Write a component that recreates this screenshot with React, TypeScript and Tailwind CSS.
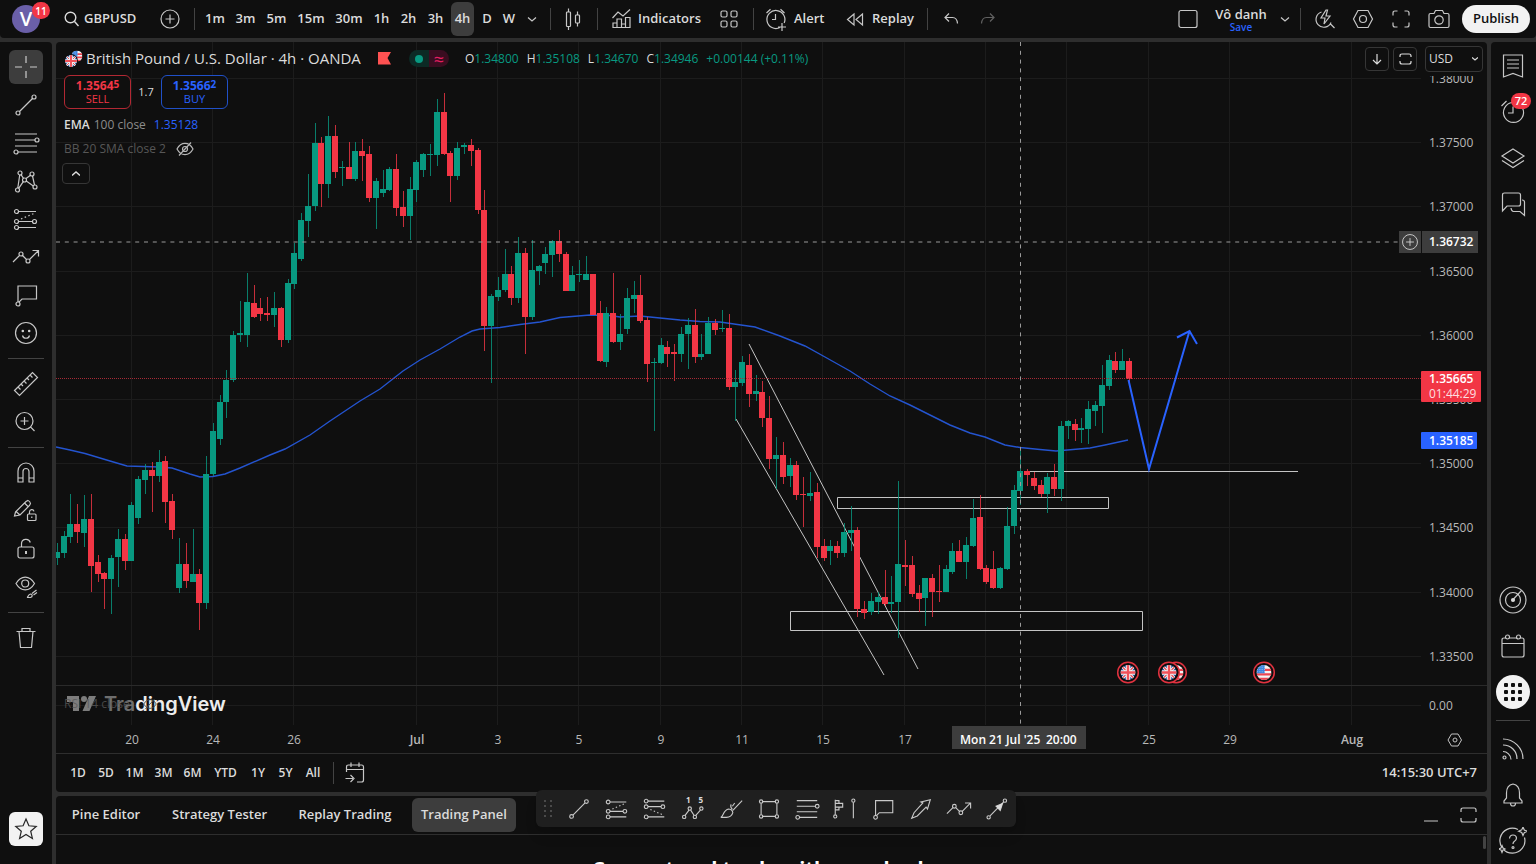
import { useState } from "react";
import type { ReactNode } from "react";

type Candle = [number, number, number, number, "g" | "r"];

// [high, body top, body bottom, low, colour] in pane pixels
const candles: Candle[] = [
  [543, 552, 558, 565, "g"], [531, 536, 553, 558, "g"], [494, 524, 537, 543, "g"], [504, 524, 532, 543, "r"],
  [495, 519, 533, 547, "g"], [494, 519, 566, 592, "r"], [555, 562, 574, 582, "r"], [572, 573, 579, 609, "r"],
  [555, 558, 579, 614, "g"], [529, 539, 557, 587, "g"], [534, 539, 561, 570, "r"], [502, 505, 561, 561, "g"],
  [476, 479, 518, 524, "g"], [464, 470, 480, 494, "g"], [462, 470, 476, 512, "r"], [450, 462, 476, 482, "g"],
  [456, 461, 502, 523, "r"], [494, 501, 530, 539, "r"], [538, 564, 588, 593, "g"], [543, 564, 581, 588, "r"],
  [529, 574, 582, 582, "g"], [569, 574, 603, 630, "r"], [456, 474, 603, 609, "g"], [423, 431, 474, 476, "g"],
  [395, 402, 439, 445, "g"], [370, 380, 402, 418, "g"], [331, 335, 380, 382, "g"], [301, 333, 335, 342, "g"],
  [273, 302, 335, 347, "g"], [285, 303, 317, 318, "r"], [298, 308, 314, 321, "r"], [297, 313, 315, 321, "r"],
  [292, 308, 315, 327, "g"], [307, 308, 340, 347, "r"], [279, 283, 340, 343, "g"], [243, 253, 284, 289, "g"],
  [213, 220, 259, 261, "g"], [174, 206, 221, 237, "g"], [123, 143, 206, 211, "g"], [137, 143, 184, 207, "r"],
  [116, 136, 184, 198, "g"], [125, 136, 172, 178, "r"], [161, 167, 168, 186, "g"], [142, 167, 179, 179, "r"],
  [142, 151, 179, 181, "g"], [139, 151, 156, 181, "r"], [146, 154, 198, 202, "r"], [178, 181, 198, 229, "g"],
  [170, 189, 193, 197, "g"], [167, 169, 190, 191, "g"], [154, 169, 208, 216, "r"], [191, 207, 216, 227, "r"],
  [177, 189, 216, 240, "g"], [160, 162, 190, 202, "g"], [153, 154, 170, 177, "g"], [144, 154, 155, 176, "g"],
  [99, 112, 155, 166, "g"], [93, 112, 154, 155, "r"], [151, 153, 176, 202, "r"], [142, 148, 176, 180, "g"],
  [143, 145, 147, 154, "g"], [139, 145, 151, 166, "r"], [148, 150, 210, 214, "r"], [190, 210, 326, 351, "r"],
  [294, 296, 326, 383, "g"], [277, 290, 297, 301, "g"], [249, 274, 290, 292, "g"], [266, 274, 298, 305, "r"],
  [237, 253, 298, 303, "g"], [248, 253, 317, 354, "r"], [240, 270, 317, 320, "g"], [265, 266, 271, 285, "g"],
  [247, 254, 263, 274, "g"], [240, 241, 255, 277, "g"], [230, 241, 254, 262, "r"], [252, 254, 291, 291, "r"],
  [266, 275, 291, 291, "g"], [260, 274, 275, 282, "g"], [256, 274, 280, 280, "g"], [274, 274, 315, 315, "r"],
  [301, 313, 361, 362, "r"], [307, 313, 362, 367, "g"], [273, 313, 342, 343, "r"], [314, 334, 342, 350, "g"],
  [288, 298, 329, 334, "g"], [281, 295, 299, 313, "g"], [275, 295, 321, 323, "r"], [317, 320, 364, 382, "r"],
  [358, 362, 363, 431, "g"], [338, 345, 363, 364, "g"], [341, 347, 354, 367, "r"], [344, 352, 354, 381, "r"],
  [327, 334, 354, 362, "g"], [318, 325, 334, 369, "g"], [309, 325, 357, 363, "r"], [334, 354, 357, 360, "g"],
  [317, 323, 354, 354, "g"], [319, 323, 330, 335, "r"], [310, 328, 329, 332, "g"], [314, 328, 387, 390, "r"],
  [370, 382, 387, 421, "g"], [356, 362, 383, 386, "g"], [354, 365, 394, 407, "r"], [375, 391, 394, 401, "g"],
  [381, 392, 418, 427, "r"], [396, 418, 459, 469, "r"], [437, 455, 459, 489, "g"], [442, 455, 477, 484, "r"],
  [458, 465, 476, 487, "g"], [461, 465, 495, 500, "r"], [477, 494, 495, 527, "r"], [472, 493, 496, 501, "g"],
  [483, 492, 547, 558, "r"], [539, 546, 558, 561, "r"], [540, 546, 551, 565, "g"], [541, 546, 553, 558, "r"],
  [523, 532, 553, 557, "g"], [506, 530, 533, 551, "g"], [527, 530, 609, 617, "r"], [601, 609, 613, 619, "r"],
  [593, 601, 612, 615, "g"], [592, 597, 602, 614, "g"], [570, 597, 604, 606, "r"], [576, 602, 604, 613, "g"],
  [481, 564, 602, 638, "g"], [540, 565, 567, 586, "r"], [556, 565, 594, 597, "r"], [585, 593, 599, 612, "r"],
  [578, 578, 598, 626, "g"], [574, 578, 592, 617, "r"], [565, 591, 592, 602, "r"], [565, 569, 592, 592, "g"],
  [543, 551, 572, 574, "g"], [540, 551, 562, 562, "r"], [537, 545, 562, 579, "g"], [499, 518, 546, 547, "g"],
  [495, 517, 569, 570, "r"], [565, 568, 582, 584, "r"], [551, 569, 588, 589, "r"], [567, 568, 588, 589, "g"],
  [507, 526, 569, 570, "g"], [485, 490, 526, 534, "g"], [448, 471, 491, 505, "g"], [469, 471, 475, 486, "r"],
  [472, 478, 486, 490, "r"], [480, 485, 494, 497, "r"], [473, 477, 494, 513, "g"], [464, 477, 489, 496, "r"],
  [421, 426, 489, 501, "g"], [420, 421, 426, 439, "g"], [419, 424, 430, 441, "r"], [418, 428, 430, 443, "g"],
  [401, 409, 429, 444, "g"], [401, 405, 411, 426, "g"], [365, 385, 406, 433, "g"], [355, 360, 386, 390, "g"],
  [352, 361, 370, 373, "r"], [349, 361, 370, 370, "g"], [358, 361, 379, 385, "r"],
];

const ema =
  "56,447 70,450 85,453.5 110,461 127,466 160,467 172,468 190,474 200,477 213,476.5 225,474 240,468 270,455 285,449 310,435 330,421 360,401 380,389 403,371 420,360 440,349 460,337 472,331 480,329 500,327.5 520,324.5 540,322 560,317.5 590,315 610,315.5 620,317 640,316 660,318 680,320 700,321.5 720,322 755,327 780,336 805,346 825,357 850,371 870,384 890,396 910,405 930,415 950,425 970,433 985,437 1005,445 1020,447.5 1040,449.5 1056,451 1090,448 1105,445 1128,440";

const prices: [string, number][] = [
  ["1.38000", 79], ["1.37500", 143], ["1.37000", 207], ["1.36500", 272], ["1.36000", 336],
  ["1.35500", 400], ["1.35000", 464], ["1.34500", 528], ["1.34000", 593], ["1.33500", 657], ["0.00", 706],
];

const dates: [string, number][] = [
  ["20", 132], ["24", 213], ["26", 294], ["Jul", 417], ["3", 498], ["5", 579], ["9", 661], ["11", 742],
  ["15", 823], ["17", 905], ["", 986], ["", 1067], ["25", 1149], ["29", 1230], ["Aug", 1352],
];

const Icon = ({ children, size = 28, w = 1.2 }: { children: ReactNode; size?: number; w?: number }) => (
  <svg width={size} height={size} viewBox="0 0 28 28" fill="none" stroke="currentColor" strokeWidth={w} strokeOpacity=".9" className="shrink-0" aria-hidden="true">
    {children}
  </svg>
);

const Chevron = () => (
  <Icon><path d="M10 12.500l4 3.500 4-3.500" /></Icon>
);

const icons: Record<string, ReactNode> = {
  cross: <path d="M14 3v7M14 18v7M3 14h7M18 14h7" />,
  trend: <><circle cx="22" cy="6" r="2" /><circle cx="6" cy="22" r="2" /><path d="M7.500 20.500l13-13" /></>,
  fib: <><path d="M3 5h22M3 11h20M3 17h22M6 23h19" /><circle cx="25" cy="11" r="2" /><circle cx="4" cy="23" r="2" /></>,
  pattern: <><circle cx="8" cy="6" r="2" /><circle cx="20" cy="7" r="2" /><circle cx="12.500" cy="13" r="2" /><circle cx="5.500" cy="23" r="2" /><circle cx="23" cy="20" r="2" /><path d="M7.700 8L5.800 21M9 7.700l2.500 3.700M18.500 8.300L14 11.500M20.500 9l2 9M14.300 14.100l7 4.800M11.300 14.700L6.700 21.400" /></>,
  forecast: <><circle cx="4.500" cy="6.500" r="2" /><circle cx="4.500" cy="16.500" r="2" /><circle cx="4.500" cy="22.500" r="2" /><circle cx="22.500" cy="16.500" r="2" /><path d="M6.500 6.500H24M6.500 16.500h14M6.500 22.500H24" /><path d="M9 14L23 8" strokeDasharray="1.500 2.500" /></>,
  forecastDown: <><circle cx="4.500" cy="5.500" r="2" /><circle cx="4.500" cy="11.500" r="2" /><circle cx="22.500" cy="11.500" r="2" /><circle cx="4.500" cy="22.500" r="2" /><path d="M6.500 5.500H24M6.500 11.500h14M6.500 22.500H24" /><path d="M9 14.500l14 6" strokeDasharray="1.500 2.500" /></>,
  wave: <><path d="M1 19l6.500-6.500M10.500 12.500l4 4M17.500 16.500l9-9M20.500 7.500h6v6" /><circle cx="9" cy="11" r="2" /><circle cx="16" cy="18" r="2" /></>,
  note: <><path d="M6 21V5h18.500v13H10l-3 3.200" /><circle cx="6" cy="23" r="2" /></>,
  smile: <><circle cx="14" cy="14" r="10.500" /><path d="M10.500 16.500a3.600 3.600 0 0 0 7 0" /><circle cx="10.800" cy="12" r=".7" fill="currentColor" /><circle cx="17.200" cy="12" r=".7" fill="currentColor" /></>,
  ruler: <path d="M2.500 20.500l18-18 5 5-18 18zM6 17l2.500 2.500M9 14l2 2M12 11l2.500 2.500M15 8l2 2M18 5l2.500 2.500" />,
  zoom: <><circle cx="12.500" cy="13" r="8.500" /><path d="M12.500 9v8M8.500 13h8M18.700 19.200l3.800 3.800" /></>,
  magnet: <path d="M6 23V12a8 8 0 0 1 16 0v11h-5V12.500a3 3 0 0 0-6 0V23zM6 19h5M17 19h5" />,
  pencil: <><path d="M3.500 15L14 4.500l2-1q2 .5 2.500 3l-1 2L8 18l-5.500 1zM12.500 6l4 4M4 14.500L8 18" /><rect x="15.500" y="17" width="8.500" height="6.500" rx="1" /><path d="M17.500 17v-2a2.300 2.300 0 0 1 4.500-.7M19.800 19.500v1.500" /></>,
  lock: <><rect x="6" y="12" width="16" height="11" rx="2" /><path d="M9.500 12V9a4.500 4.500 0 0 1 8.800-1.500" /><path d="M14 16v3" strokeWidth="2" /></>,
  eye: <><path d="M4 10.500c5-8.500 13.500-8.500 18.500 0-5 8.500-13.500 8.500-18.500 0z" /><circle cx="13.200" cy="10.500" r="3.500" /><path d="M15 24.500c1.500-.5 1-3 3.500-3.500 2 0 2.500 3 0 3.500zM20 20.500l4.500-3.500M21.500 22l3.500-2.500" /></>,
  trash: <path d="M4.500 7.500h19M10 7V4.500h8V7M7 7.500l1.500 16h11l1.500-16" />,
  star: <path d="M14 4l2.900 6.800 7.300.6-5.500 4.800 1.700 7.200L14 19.500l-6.400 3.900 1.700-7.200-5.500-4.800 7.300-.6z" />,
  candles: <><rect x="6.500" y="7" width="4" height="14.500" rx=".8" /><path d="M8.500 3.500V7M8.500 21.500V25" /><rect x="15.500" y="10" width="4" height="8" rx=".8" /><path d="M17.500 6.500V10M17.500 18v3.500" /></>,
  indicators: <path d="M5.500 13l5.500-6 5 4 7-6.500M6 22.500v-4.500h4v-4h4.500v5h4v-6.500H23v10zM10 18v4.500M14.500 19v3.500M18.500 19v3.500" />,
  layouts: <><rect x="6" y="6" width="6" height="6" rx="1.500" /><rect x="16" y="6" width="6" height="6" rx="1.500" /><rect x="6" y="16" width="6" height="6" rx="1.500" /><rect x="16" y="16" width="6" height="6" rx="1.500" /></>,
  alert: <><path d="M18 22.500a9 9 0 1 1 4.200-4.500M13.500 9v5.500H10M4.500 8l4-3.800M18.500 4.200l4 3.800M20 18v8M16 22h8" /></>,
  replay: <path d="M13 9l-6.500 5.500L13 20zM21.500 9L15 14.500l6.500 5.500z" />,
  undo: <path d="M12 8.500L8 12.500l4 4M8 12.500h7.500q4.500 0 5 6" />,
  redo: <path d="M17 8.500l4 4-4 4M21 12.500h-7.500q-4.500 0-5 6" />,
  square: <rect x="5" y="5.500" width="18" height="17" rx="2" />,
  flashSearch: <path d="M10.500 7A7.800 7.800 0 1 0 20 17.500M15 5l-5 8h4l-1 6 6-8h-4l1.500-6zM19.500 19l4 4" />,
  hex: <><path d="M9 5.500h10l4.500 8.500-4.500 8.500H9L4.500 14z" /><circle cx="14" cy="14" r="3.500" /></>,
  full: <path d="M6 10.500V8q0-2 2-2h2.500M17.500 6H20q2 0 2 2v2.500M22 17.500V20q0 2-2 2h-2.500M10.500 22H8q-2 0-2-2v-2.500" />,
  camera: <><path d="M4 21V10q0-1.500 1.500-1.500h3.500l1.500-3h7l1.500 3h3.500q1.500 0 1.500 1.500v11q0 1.500-1.500 1.500h-17Q4 22.500 4 21z" /><circle cx="14" cy="15" r="4.200" /></>,
  watch: <path d="M4.500 3h19v22L14 21.500 4.500 25zM8 8h12M8 12h12M8 16h12" />,
  clock: <path d="M13.500 4.500a10 10 0 1 0 2 0M14 8.500v6.500H9M2.500 8l5-5M20 3l5.500 5" />,
  layers: <path d="M14 5l11 7-11 7-11-7zM3 16.500l11 7 11-7" />,
  chat: <path d="M5.500 3h14q2 0 2 2v9q0 2-2 2H8l-4.500 5V5q0-2 2-2zM23 10q2.500 0 2.500 2v13.500L21 21.500h-6.500q-2 0-2.500-3.500" />,
  radar: <><circle cx="14" cy="14" r="13" /><circle cx="14" cy="14" r="7.500" /><circle cx="14" cy="14" r="1.500" fill="currentColor" /><path d="M14.500 13l8-8.500" /></>,
  calendar: <><path d="M3 8q0-2 2-2h18q2 0 2 2v15q0 2-2 2H5q-2 0-2-2zM3 11.500h22" /><circle cx="8.500" cy="5" r="2" fill="#0f0f0f" /><circle cx="19.500" cy="5" r="2" fill="#0f0f0f" /></>,
  feed: <><path d="M4 4c11 0 20 9 20 20M4 10c8 0 14 6 14 14M4 16.500c4 0 8 3.500 8 8" /><circle cx="5.500" cy="22.500" r="1.500" /></>,
  bell: <path d="M14 3c-5 1-6.500 5-6.500 9v5L5 20v2h18v-2l-2.500-3v-5c0-4-1.500-8-6.500-9zM11.500 22.500a2.500 2.500 0 0 0 5 0" />,
  help: <><path d="M19 2.500a12.500 12.500 0 1 0 6.500 8M10.500 11.500q.3-3.500 3.500-3.500t3.500 3q0 2-2 3.200-1.500.8-1.500 2.800" /><circle cx="14" cy="20.500" r="1" /><path d="M24 0l1.300 3 3 1.300-3 1.300L24 8.500l-1.300-3-3-1.300 3-1.300zM3 18.500l1 2.500 2 1-2 1-1 2.500-1-2.500-2-1 2-1z" fill="#0f0f0f" /></>,
  goto: <path d="M5.500 13V8q0-2 2-2h13q2 0 2 2v13q0 2-2 2H16M5.500 10.500h17M10 3.500V8M18 3.500V8M4.500 19.500h7.500M9.500 16l3.500 3.500L9.500 23" />,
  elliott: <><path d="M5.500 20.800l4.200-5.600M11.500 15.200l3.600 5.600M17 20.800l5-5.600" /><circle cx="4.500" cy="22.500" r="1.800" /><circle cx="10.500" cy="13.500" r="1.800" /><circle cx="16" cy="22.500" r="1.800" /><circle cx="23" cy="13.500" r="1.800" /></>,
  brush: <path d="M3 23c3-1 2.500-8 8.500-9q4 .5 4.500 4-1.500 5-7 5zM14 9q-1 3 1.500 5.500M16 15.500L26 5M15.500 11l2.500-3.500" />,
  rect: <><path d="M7 6h14M7 22h14M5.500 8v12M22.500 8v12" /><circle cx="5.500" cy="6" r="1.800" /><circle cx="22.500" cy="6" r="1.800" /><circle cx="5.500" cy="22" r="1.800" /><circle cx="22.500" cy="22" r="1.800" /></>,
  profile: <><path d="M3.500 20V4M3.500 5h4v3h4v4h-4v3h-4M3.500 8h4M3.500 12h4" /><circle cx="3.500" cy="22" r="1.700" /><circle cx="23" cy="5" r="1.700" /><path d="M23 7v17" /></>,
  arrow: <path d="M4 24l2.500-6L16 7.500l-2-1L24 4l-3 10-1.500-2L10 21.500z" />,
  arrowLine: <><circle cx="5" cy="23" r="1.800" /><circle cx="22.500" cy="5" r="1.800" /><path d="M6.500 21.500L21 6.500" /><path d="M20 8l-2.500 7.500-4.500-4.500z" fill="currentColor" /></>,
};

const UkFlag = ({ x, y, r }: { x: number; y: number; r: number }) => (
  <svg x={x - r} y={y - r} width={r * 2} height={r * 2} viewBox="0 0 20 20">
    <clipPath id={`uk${x}`}><circle cx="10" cy="10" r="10" /></clipPath>
    <g clipPath={`url(#uk${x})`}>
      <rect width="20" height="20" fill="#1c4f9c" />
      <path d="M0 0l20 20M20 0L0 20" stroke="#f3f3f3" strokeWidth="4" />
      <path d="M0 0l20 20M20 0L0 20" stroke="#e8434c" strokeWidth="1.500" />
      <path d="M10 0v20M0 10h20" stroke="#f3f3f3" strokeWidth="6" />
      <path d="M10 0v20M0 10h20" stroke="#f0525a" strokeWidth="3.200" />
    </g>
  </svg>
);

const UsFlag = ({ x, y, r }: { x: number; y: number; r: number }) => (
  <svg x={x - r} y={y - r} width={r * 2} height={r * 2} viewBox="0 0 20 20">
    <clipPath id={`us${x}`}><circle cx="10" cy="10" r="10" /></clipPath>
    <g clipPath={`url(#us${x})`}>
      <rect width="20" height="20" fill="#f3f3f3" />
      <path d="M0 6.500h20M0 12.500h20M0 18.500h20" stroke="#ef4550" strokeWidth="3.200" />
      <rect width="11" height="11" fill="#3d86e0" />
      <path d="M1 3h10M1 6h10M1 9h10" stroke="#cfe3fa" strokeWidth="1" strokeDasharray="1 2" />
    </g>
  </svg>
);

const Separator = () => (
  <div className="flex w-3 shrink-0 justify-center">
    <div className="h-[22px] w-px bg-[#434343]" />
  </div>
);

const intervals: [string, string][] = [
  ["1m", "w-[30px]"], ["3m", "w-[31px]"], ["5m", "w-[31px]"], ["15m", "w-[38px]"], ["30m", "w-[38px]"],
  ["1h", "w-[27px]"], ["2h", "w-[27px]"], ["3h", "w-[27px]"], ["4h", "w-[27px]"], ["D", "w-[22px]"], ["W", "w-[22px]"],
];

const Header = () => {
  const [active, setActive] = useState("4h");

  return (
    <header className="flex h-[38px] shrink-0 items-center rounded-b bg-[#0f0f0f] text-[13px] font-semibold">
      <div className="w-14 shrink-0 pl-3">
        <button className="relative flex h-7 w-7 items-center justify-center rounded-full bg-[#6a5fa8] text-xl text-white">
          V
          <span className="absolute -top-[3px] left-5 flex h-[17px] w-[18px] items-center justify-center rounded-full bg-[#f23645] text-[10px]">11</span>
        </button>
      </div>
      <button className="flex w-24 items-center gap-1 pl-2">
        <svg width="16" height="16" viewBox="0 0 16 16" fill="none" stroke="currentColor" strokeWidth="1.400"><circle cx="6.500" cy="6.500" r="5.300" /><path d="M10.500 10.500l4 4.500" /></svg>
        GBPUSD
      </button>
      <button className="flex w-9 justify-center" aria-label="Compare">
        <Icon><circle cx="14" cy="14" r="9" /><path d="M14 9.500v9M9.500 14h9" /></Icon>
      </button>
      <Separator />
      {intervals.map(([label, width]) => (
        <button key={label} onClick={() => setActive(label)} className={`${width} flex shrink-0 justify-center`}>
          <span className={`flex h-[34px] items-center rounded-md ${active === label ? "w-[23px] justify-center bg-[#3d3d3d]" : ""}`}>{label}</span>
        </button>
      ))}
      <button className="flex w-6 justify-center" aria-label="More intervals"><Chevron /></button>
      <Separator />
      <button className="flex w-[35px] justify-center" aria-label="Chart type"><Icon>{icons.candles}</Icon></button>
      <Separator />
      <button className="flex w-[108px] items-center gap-[3px] pl-1"><Icon>{icons.indicators}</Icon>Indicators</button>
      <button className="flex w-9 justify-center" aria-label="Templates"><Icon>{icons.layouts}</Icon></button>
      <Separator />
      <button className="flex w-[78px] items-center gap-1 pl-[3px]"><Icon>{icons.alert}</Icon>Alert</button>
      <button className="flex w-[84px] items-center gap-[3px] pl-1"><Icon>{icons.replay}</Icon>Replay</button>
      <Separator />
      <button className="flex w-9 justify-center" aria-label="Undo"><Icon>{icons.undo}</Icon></button>
      <button className="flex w-9 justify-center text-[#6a6a6a]" aria-label="Redo"><Icon>{icons.redo}</Icon></button>

      <div className="ml-auto flex items-center pr-[6px]">
        <button className="flex w-9 justify-center" aria-label="Layout"><Icon>{icons.square}</Icon></button>
        <button className="flex w-[70px] flex-col items-center leading-4">
          Vô danh
          <span className="text-[10px] leading-[10px] text-[#2962ff]">Save</span>
        </button>
        <button className="flex w-[18px] justify-center" aria-label="Manage layouts"><Chevron /></button>
        <Separator />
        <button className="flex w-[38px] justify-center" aria-label="Quick search"><Icon>{icons.flashSearch}</Icon></button>
        <button className="flex w-[38px] justify-center" aria-label="Settings"><Icon>{icons.hex}</Icon></button>
        <button className="flex w-[38px] justify-center" aria-label="Fullscreen"><Icon>{icons.full}</Icon></button>
        <button className="flex w-[38px] justify-center" aria-label="Snapshot"><Icon>{icons.camera}</Icon></button>
        <button className="ml-1 h-7 w-[68px] rounded-full bg-[#f2f2f2] text-[#0f0f0f]">Publish</button>
      </div>
    </header>
  );
};

const toolGroups = [
  ["cross", "trend", "fib", "pattern", "forecast", "wave", "note", "smile"],
  ["ruler", "zoom"],
  ["magnet", "pencil", "lock", "eye"],
  ["trash"],
];

const DrawingTools = () => (
  <aside className="flex w-[52px] shrink-0 flex-col items-center rounded-tr bg-[#0f0f0f] pt-2 pb-[18px]">
    {toolGroups.map((group, i) => (
      <div key={i} className="flex flex-col items-center">
        {i > 0 && <div className="my-2 h-px w-9 bg-[#434343]" />}
        <div className="flex flex-col gap-1">
          {group.map((name) => (
            <button
              key={name}
              aria-label={name}
              className={`flex h-[34px] w-[34px] items-center justify-center rounded-md ${name === "cross" ? "bg-[#3d3d3d]" : ""}`}
            >
              <Icon>{icons[name]}</Icon>
            </button>
          ))}
        </div>
      </div>
    ))}
    <button aria-label="Favorites" className="mt-auto flex h-[34px] w-[34px] items-center justify-center rounded-md bg-[#f2f2f2] text-[#0f0f0f]">
      <Icon>{icons.star}</Icon>
    </button>
  </aside>
);

const RightBar = () => (
  <aside className="flex w-[45px] shrink-0 flex-col items-center rounded-tl bg-[#0f0f0f] pt-px pr-px">
    {["watch", "clock", "layers", "chat"].map((name) => (
      <button key={name} aria-label={name} className="relative flex h-[46px] w-full items-center justify-center">
        <Icon>{icons[name]}</Icon>
        {name === "clock" && (
          <span className="absolute top-1 right-1 flex h-4 w-5 items-center justify-center rounded-full bg-[#f23645] text-[11px] font-semibold text-white">72</span>
        )}
      </button>
    ))}
    <div className="mt-auto" />
    {["radar", "calendar"].map((name) => (
      <button key={name} aria-label={name} className="flex h-[46px] w-full items-center justify-center">
        <Icon>{icons[name]}</Icon>
      </button>
    ))}
    <button aria-label="Products" className="flex h-[46px] w-full items-center justify-center">
      <span className="flex h-[34px] w-[34px] items-center justify-center rounded-full bg-[#f2f2f2]">
        <span className="grid grid-cols-[4px_4px_4px] gap-[3px]">
          {Array.from({ length: 9 }, (_, i) => (
            <span key={i} className="h-1 w-1 rounded-[1px] bg-[#0f0f0f]" />
          ))}
        </span>
      </span>
    </button>
    <div className="my-[5px] h-px w-[34px] bg-[#434343]" />
    {["feed", "bell", "help"].map((name) => (
      <button key={name} aria-label={name} className="flex h-[46px] w-full items-center justify-center">
        <Icon>{icons[name]}</Icon>
      </button>
    ))}
  </aside>
);

const Chart = () => (
  <svg viewBox="56 42 1431 711" preserveAspectRatio="xMaxYMin slice" className="block h-full w-full text-xs" role="img" aria-label="GBPUSD 4h chart">
    <g stroke="#1c1c1c">
      {dates.map(([, x]) => <path key={x} d={`M${x - 0.5} 42V725`} />)}
      {prices.map(([, y]) => <path key={y} d={`M56 ${y - 0.5}H1421`} />)}
      <path d="M56 685.500H1487" stroke="#2a2a2a" />
    </g>

    {/* drawings under the series */}
    <g fill="none" stroke="#c4c4c4">
      <path d="M749 344l169 325M736 419l148 256" />
      <path d="M837.500 497.500h271v11h-271zM790.500 611.500h352v19h-352z" />
      <path d="M1030 471.500h268" />
    </g>

    <polyline points={ema} fill="none" stroke="#2454cf" strokeWidth="1.400" />
    {candles.map(([high, top, bottom, low, tone], i) => {
      const x = Math.round(1020.3 - (142 - i) * 6.785);
      const color = tone === "g" ? "#089981" : "#f23645";
      return (
        <g key={i} fill={color}>
          <rect x={x} y={high} width="1" height={low - high} opacity=".8" />
          <rect x={x - 3} y={top} width="6" height={Math.max(bottom - top, 1)} />
        </g>
      );
    })}

    <path d="M56 378.500H1421" stroke="#a52a36" strokeDasharray="1 1" />
    <g fill="none" stroke="#2962ff" strokeWidth="2">
      <path d="M1128.500 380l20.500 89 40.500-138M1177 337.500l12.500-6.500 7.500 13" />
    </g>

    {/* economic events */}
    <g fill="#0f0f0f" stroke="#e0323f" strokeWidth="1.500">
      <circle cx="1176" cy="672.500" r="10.300" />
    </g>
    <UsFlag x={1176} y={672.5} r={7.5} />
    <g fill="#0f0f0f" stroke="#e0323f" strokeWidth="1.500">
      <circle cx="1128" cy="672.500" r="10.300" />
      <circle cx="1169" cy="672.500" r="10.300" />
      <circle cx="1264" cy="672.500" r="10.300" />
    </g>
    <UkFlag x={1128} y={672.5} r={7.5} />
    <UkFlag x={1169} y={672.5} r={7.5} />
    <UsFlag x={1264} y={672.5} r={7.5} />

    {/* crosshair */}
    <path d="M56 242H1399M1020.500 42V725" stroke="#9a9a9a" strokeDasharray="4 4.800" />

    {/* price scale */}
    <g fill="#b8b8b8">
      {prices.map(([label, y]) => <text key={label} x="1429" y={y + 4}>{label}</text>)}
    </g>
    <rect x="1422" y="231" width="56" height="22" fill="#3d3d3d" />
    <rect x="1421" y="371" width="60" height="31" rx="1" fill="#f23645" />
    <rect x="1421" y="432" width="56" height="17" rx="1" fill="#2962ff" />
    <g fill="#fff" fontWeight="600">
      <text x="1429" y="246">1.36732</text>
      <text x="1429" y="383">1.35665</text>
      <text x="1429" y="398" fillOpacity=".85" fontWeight="400">01:44:29</text>
      <text x="1429" y="445">1.35185</text>
    </g>

    {/* time scale */}
    <g fill="#b8b8b8" textAnchor="middle">
      {dates.map(([label, x]) => (
        <text key={x} x={x} y="744" fontWeight={/[A-Z]/.test(label) ? 600 : 400}>{label}</text>
      ))}
    </g>
    <rect x="952" y="726" width="134" height="23" fill="#3d3d3d" />
    <g fill="#fff" fontWeight="600">
      <text x="960" y="744">Mon 21 Jul '25</text>
      <text x="1046" y="744">20:00</text>
    </g>
    <g fill="none" stroke="#c4c4c4"><path d="M1451.500 734h6.500l3.500 6-3.500 6h-6.500l-3.500-6z" /><circle cx="1455" cy="740" r="2" /></g>
  </svg>
);

const Legend = () => (
  <div className="absolute top-0 left-2 flex flex-col items-start">
    <div className="flex h-[33px] items-center">
      <svg width="20" height="20" viewBox="0 0 20 20" className="mr-[2px]">
        <UsFlag x={13} y={7} r={5.5} />
        <circle cx="7" cy="12" r="7" fill="#0f0f0f" />
        <UkFlag x={7} y={12} r={6} />
      </svg>
      <h1 className="w-[292px] text-[15px] font-medium whitespace-nowrap">British Pound / U.S. Dollar · 4h · OANDA</h1>
      <svg width="13" height="13" viewBox="0 0 13 13"><path d="M0 0h13l-3.500 6 3.500 6.500H0z" fill="#ff5252" /></svg>
      <div className="ml-[18px] flex h-[17px] w-10 overflow-hidden rounded-full">
        <span className="flex w-5 items-center justify-center bg-[#0c2a25]"><span className="h-2 w-2 rounded-full bg-[#089981]" /></span>
        <span className="flex w-5 items-center justify-center bg-[#3a0d20] text-lg leading-none text-[#e91e63]">≈</span>
      </div>
      <p className="ml-4 flex gap-2 text-xs whitespace-nowrap text-[#089981]">
        <span><b className="font-medium text-[#dbdbdb]">O</b>1.34800</span>
        <span><b className="font-medium text-[#dbdbdb]">H</b>1.35108</span>
        <span><b className="font-medium text-[#dbdbdb]">L</b>1.34670</span>
        <span><b className="font-medium text-[#dbdbdb]">C</b>1.34946</span>
        <span>+0.00144 (+0.11%)</span>
      </p>
    </div>
    <div className="flex items-center text-center">
      <button className="h-[34px] w-[67px] rounded-md border border-[#b22833] bg-[#0f0f0f] text-[#f23645]">
        <span className="block text-xs leading-[14px] font-bold">1.3564<span className="align-[2px] text-[10px] leading-none">5</span></span>
        <span className="block text-[11px] leading-3">SELL</span>
      </button>
      <span className="w-[30px] text-[11px]">1.7</span>
      <button className="h-[34px] w-[67px] rounded-md border border-[#2050c8] bg-[#0f0f0f] text-[#2962ff]">
        <span className="block text-xs leading-[14px] font-bold">1.3566<span className="align-[2px] text-[10px] leading-none">2</span></span>
        <span className="block text-[11px] leading-3">BUY</span>
      </button>
    </div>
    <p className="mt-1 flex h-6 items-center text-xs text-[#8c8c8c]">
      <b className="mr-1 font-semibold text-[#dbdbdb]">EMA</b>100 close<span className="ml-2 text-[#2962ff]">1.35128</span>
    </p>
    <div className="flex h-6 items-center gap-[10px] text-xs text-[#575757]">
      BB 20 SMA close 2
      <svg width="18" height="14" viewBox="0 0 18 14" fill="none" stroke="#b8b8b8" strokeWidth="1.200"><path d="M1 7c4-7.500 12-7.500 16 0-4 7.500-12 7.500-16 0zM3 13.500L15 .5" /><circle cx="9" cy="7" r="2.500" /></svg>
    </div>
    <button aria-label="Collapse" className="-ml-[2px] mt-[2px] flex h-[21px] w-7 items-center justify-center rounded border border-[#363636]">
      <svg width="8" height="5" viewBox="0 0 8 5" fill="none" stroke="currentColor" strokeWidth="1.400"><path d="M0 4.500l4-3.500 4 3.500" /></svg>
    </button>
  </div>
);

const ranges: [string, string][] = [
  ["1D", "w-7"], ["5D", "w-7"], ["1M", "w-[29px]"], ["3M", "w-[29px]"], ["6M", "w-[29px]"],
  ["YTD", "w-[37px]"], ["1Y", "w-7"], ["5Y", "w-[27px]"], ["All", "w-7"],
];

const ChartPanel = () => (
  <section className="flex min-h-0 flex-1 flex-col rounded bg-[#0f0f0f]">
    <div className="relative min-h-0 flex-1 overflow-hidden">
      <Chart />
      <Legend />
      <div className="absolute top-0 right-0 flex h-[34px] items-center gap-1 pr-1">
        <button aria-label="Scroll down" className="flex h-6 w-6 items-center justify-center rounded border border-[#363636]">
          <svg width="10" height="12" viewBox="0 0 10 12" fill="none" stroke="currentColor" strokeWidth="1.200"><path d="M5 1v10M1 7l4 4 4-4" /></svg>
        </button>
        <button aria-label="Maximize pane" className="mr-1 flex h-6 w-6 items-center justify-center rounded border border-[#363636]">
          <svg width="13" height="12" viewBox="0 0 13 12" fill="none" stroke="currentColor" strokeWidth="1.200"><path d="M1 4V3q0-2 2-2h7q2 0 2 2v1M1 8v1q0 2 2 2h7q2 0 2-2V8" /></svg>
        </button>
        <div className="relative flex h-[34px] items-center bg-[#0f0f0f]">
          <select aria-label="Currency" className="h-[26px] w-[58px] appearance-none rounded border border-[#363636] bg-[#0f0f0f] pl-[3px] text-xs">
            <option>USD</option>
          </select>
          <svg width="6" height="4" viewBox="0 0 6 4" fill="none" stroke="currentColor" strokeWidth="1.300" className="pointer-events-none absolute right-[5px]"><path d="M0 .5l3 2.500 3-2.500" /></svg>
        </div>
      </div>
      <button aria-label="Add alert" className="absolute top-[189px] right-[66px] flex h-[22px] w-[22px] items-center justify-center bg-[#3d3d3d]">
        <Icon size={22}><circle cx="14" cy="14" r="9.500" /><path d="M14 9v10M9 14h10" /></Icon>
      </button>
      <div className="absolute bottom-[36px] left-2 flex items-center">
        <svg width="36" height="20" viewBox="0 0 36 20" fill="#7d7d7d" className="mr-1"><path d="M3 2h12v15H9V8H3zM25 2h7l-6.500 15h-7z" /><circle cx="20" cy="5" r="3" /></svg>
        <span className="font-[Inter] text-[20px] leading-[26px] font-semibold text-[#ececec]"><span className="text-[#6e6e6e]">Tra</span>dingView</span>
        <p className="absolute left-0 text-xs text-[#575757]/80">RSI 14 close</p>
        <svg width="14" height="12" viewBox="0 0 18 14" fill="none" stroke="#4a4a4a" strokeWidth="1.200" className="absolute left-[79px]"><path d="M1 7c4-7.500 12-7.500 16 0-4 7.500-12 7.500-16 0zM3 13.500L15 .5" /></svg>
      </div>
    </div>
    <div className="flex h-[39px] shrink-0 items-center border-t border-[#2e2e2e] pr-[10px] pl-2 text-xs font-semibold">
      {ranges.map(([label, width]) => (
        <button key={label} className={`${width} text-center`}>{label}</button>
      ))}
      <Separator />
      <button className="flex w-8 justify-center" aria-label="Go to date"><Icon>{icons.goto}</Icon></button>
      <button className="ml-auto text-[13px]">14:15:30 UTC+7</button>
    </div>
  </section>
);

const favorites = ["trend", "forecast", "forecastDown", "elliott", "brush", "rect", "fib", "profile", "note", "arrow", "wave", "arrowLine"];

const FavoritesBar = () => (
  <div className="absolute bottom-[37px] left-[480px] flex h-[37px] items-center rounded-md bg-[#1f1f1f] shadow-lg">
    <div className="grid w-6 grid-cols-2 place-content-center gap-x-1 gap-y-[3px] px-2">
      {Array.from({ length: 8 }, (_, i) => <span key={i} className="h-[2px] w-[2px] bg-[#4a4a4a]" />)}
    </div>
    {favorites.map((name) => (
      <button key={name} aria-label={name} className="relative flex w-[38px] justify-center">
        <Icon size={26}>{icons[name]}</Icon>
        {name === "elliott" && (
          <span className="absolute -top-[1px] flex w-5 justify-between pl-[3px] text-[8px] leading-[10px] font-bold"><span>1</span><span>5</span></span>
        )}
      </button>
    ))}
  </div>
);

const tabs: [string, string][] = [
  ["Pine Editor", "w-[90px]"], ["Strategy Tester", "w-[117px]"], ["Replay Trading", "w-[114px]"], ["Trading Panel", "w-[104px]"],
];

const BottomPanel = () => {
  const [tab, setTab] = useState("Trading Panel");

  return (
    <section className="h-[68px] shrink-0 overflow-hidden rounded-t bg-[#0f0f0f]">
      <div className="flex h-[39px] items-center gap-[10px] border-b border-[#2e2e2e] pr-1 pl-[5px] text-[13px] font-semibold">
        {tabs.map(([label, width]) => (
          <button key={label} onClick={() => setTab(label)} className={`${width} h-[34px] rounded-md whitespace-nowrap ${tab === label ? "bg-[#3d3d3d]" : ""}`}>
            {label}
          </button>
        ))}
        <button aria-label="Minimize" className="ml-auto"><Icon><path d="M7 20h14" /></Icon></button>
        <button aria-label="Maximize"><Icon><path d="M6 11V9q0-2 2-2h11q2 0 2 2v2M6 17v2q0 2 2 2h11q2 0 2-2v-2" /></Icon></button>
      </div>
      <div className="flex justify-end pr-px pt-px"><div className="h-[13px] w-[3px] rounded bg-[#434343]" /></div>
      <h2 className="mt-[6px] text-center text-xl leading-7 font-bold text-white">Connect and trade with your broker</h2>
    </section>
  );
};

export default function App() {
  return (
    <div className="flex h-screen flex-col gap-1 overflow-hidden bg-[#2e2e2e] font-['Open_Sans',sans-serif] text-[#dbdbdb]">
      <Header />
      <div className="flex min-h-0 flex-1 gap-1">
        <DrawingTools />
        <main className="relative flex min-w-0 flex-1 flex-col gap-1">
          <ChartPanel />
          <BottomPanel />
          <FavoritesBar />
        </main>
        <RightBar />
      </div>
    </div>
  );
}
